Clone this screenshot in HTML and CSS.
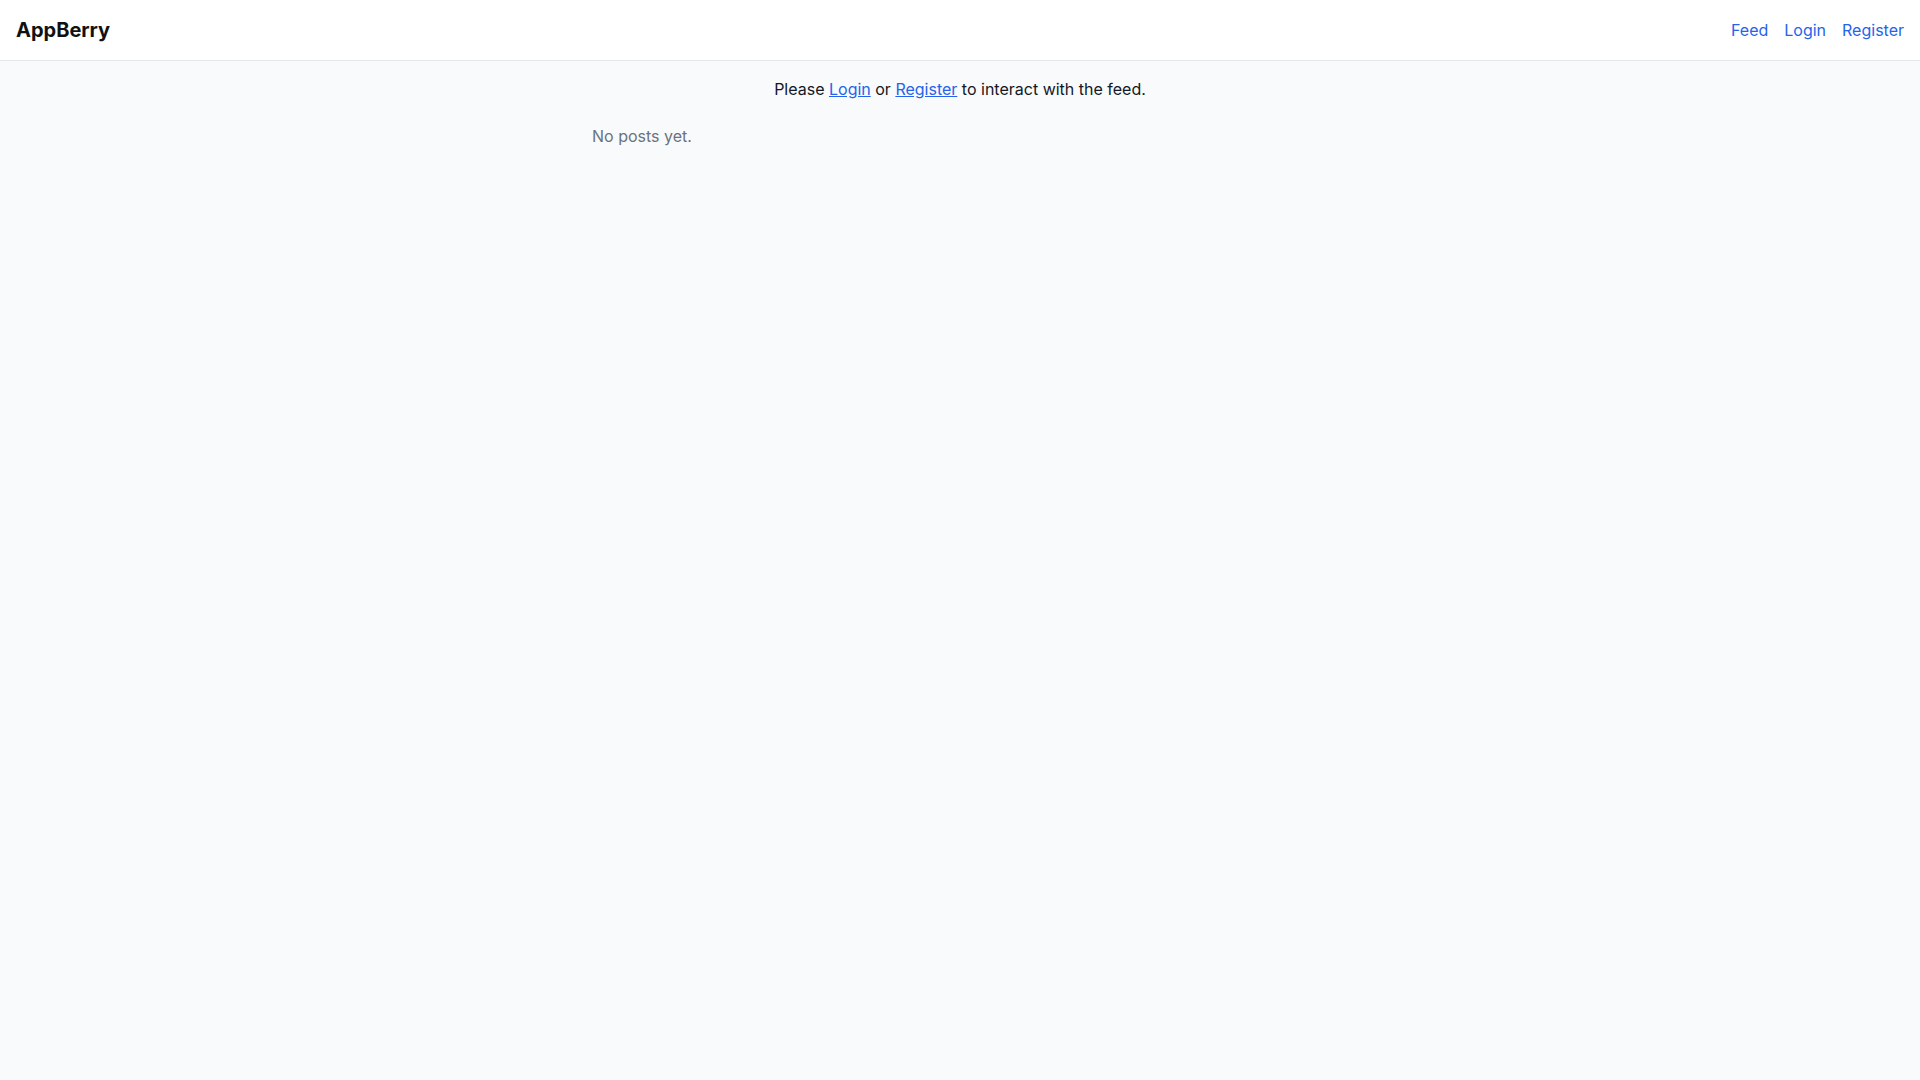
FILE: index.html
```html
<!DOCTYPE html>
<html lang="en">
<head>
<meta charset="utf-8">
<title>AppBerry</title>
<link rel="stylesheet" href="styles.css">
</head>
<body>
<header class="topbar">
  <a class="brand" href="#">AppBerry</a>
  <nav class="nav">
    <a href="#">Feed</a>
    <a href="#">Login</a>
    <a href="#">Register</a>
  </nav>
</header>
<main class="feed">
  <p class="prompt">Please <a href="#">Login</a> or <a href="#">Register</a> to interact with the feed.</p>
  <p class="empty">No posts yet.</p>
</main>
</body>
</html>
```

FILE: styles.css
```css
* { box-sizing: border-box; }
html, body { margin: 0; padding: 0; }
body {
  font-family: Inter, "Noto Sans", "Liberation Sans", sans-serif;
  font-size: 16px;
  line-height: 24px;
  color: #111827;
  background: #f9fafb;
  min-height: 100vh;
}
.topbar {
  display: flex;
  align-items: center;
  justify-content: space-between;
  height: 61px;
  padding: 0 16px;
  background: #ffffff;
  border-bottom: 1px solid #e5e7eb;
}
.brand {
  font-size: 20px;
  line-height: 28px;
  font-weight: 700;
  color: #111111;
  text-decoration: none;
}
.nav {
  display: flex;
  gap: 16px;
}
.nav a {
  color: #2563eb;
  text-decoration: none;
}
.feed {
  max-width: 768px;
  margin: 0 auto;
  padding: 16px 16px;
}
.prompt {
  margin: 0 0 23px;
  text-align: center;
  color: #111827;
}
.prompt a {
  color: #2563eb;
  text-decoration: underline;
}
.empty {
  margin: 0;
  color: #6b7280;
}
```
